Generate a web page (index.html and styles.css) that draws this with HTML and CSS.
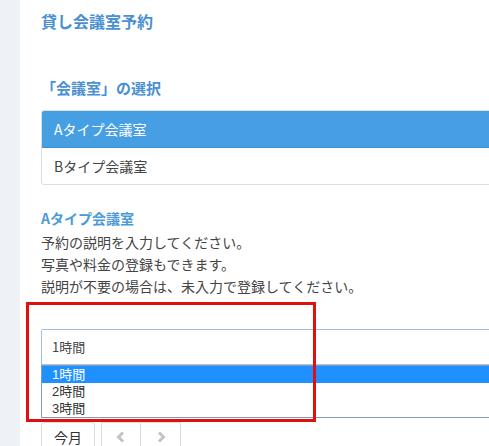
FILE: index.html
```html
<!DOCTYPE html>
<html lang="ja">
<head>
<meta charset="utf-8">
<link rel="stylesheet" href="styles.css">
</head>
<body>
<div class="page">
  <aside class="side"></aside>
  <main class="main">
    <h1 class="title">貸し会議室予約</h1>
    <h2 class="heading">「会議室」の選択</h2>
    <div class="list">
      <div class="item active">Aタイプ会議室</div>
      <div class="item">Bタイプ会議室</div>
    </div>
    <h3 class="sub">Aタイプ会議室</h3>
    <p class="desc">予約の説明を入力してください。<br>写真や料金の登録もできます。<br>説明が不要の場合は、未入力で登録してください。</p>
    <div class="select-wrap">
      <div class="select">1時間</div>
      <ul class="options">
        <li class="opt sel">1時間</li>
        <li class="opt">2時間</li>
        <li class="opt">3時間</li>
      </ul>
      <div class="mark"></div>
    </div>
    <div class="btns">
      <button class="btn today">今月</button>
      <div class="group">
        <button class="btn nav"><svg width="10" height="12" viewBox="0 0 10 12"><path d="M7 1.5 L2.5 6 L7 10.5" fill="none" stroke="#c4c4c4" stroke-width="3"/></svg></button>
        <button class="btn nav"><svg width="10" height="12" viewBox="0 0 10 12"><path d="M3 1.5 L7.5 6 L3 10.5" fill="none" stroke="#c4c4c4" stroke-width="3"/></svg></button>
      </div>
    </div>
  </main>
</div>
</body>
</html>
```
FILE: styles.css
```css
html, body {
  margin: 0;
  padding: 0;
  background: #fff;
  overflow: hidden;
}
body {
  font-family: "Noto Sans CJK JP", "Noto Sans", sans-serif;
  color: #333;
  width: 489px;
  height: 446px;
}
.page {
  display: flex;
  height: 446px;
}
.side {
  width: 20px;
  flex: none;
  background: #eef2f7;
}
.main {
  flex: none;
  width: 520px;
  padding-left: 21px;
  position: relative;
}
.title {
  margin: 10px 0 0;
  font-size: 16px;
  line-height: 22px;
  font-weight: bold;
  color: #4a90d2;
}
.heading {
  margin: 45px 0 0;
  font-size: 15px;
  line-height: 22px;
  font-weight: bold;
  color: #4a90d2;
}
.list {
  margin-top: 11px;
  border: 1px solid #ddd;
  border-radius: 3px;
  overflow: hidden;
}
.item {
  height: 36px;
  line-height: 36px;
  padding-left: 12px;
  font-size: 14px;
  color: #444;
}
.item.active {
  background: #479fe3;
  color: #fff;
  border-bottom: 1px solid #3f90d0;
}
.sub {
  margin: 22px 0 0;
  font-size: 14px;
  line-height: 22px;
  font-weight: bold;
  color: #4a9ad8;
}
.desc {
  margin: 2px 0 0;
  font-size: 14px;
  line-height: 22px;
  color: #444;
}
.select-wrap {
  margin-top: 32px;
  position: relative;
}
.select {
  height: 34px;
  line-height: 34px;
  border: 1px solid #9cc0ec;
  border-bottom-color: #a8c4e4;
  padding-left: 10px;
  font-size: 13px;
  color: #444;
  border-radius: 2px 2px 0 0;
}
.options {
  position: absolute;
  left: 0;
  right: 0;
  top: 36px;
  margin: 0;
  padding: 0;
  list-style: none;
  border: 1px solid #7f9db9;
  background: #fff;
  z-index: 2;
}
.opt {
  height: 17px;
  line-height: 17px;
  font-family: "Liberation Sans", "Noto Sans CJK JP", sans-serif;
  font-size: 13px;
  padding-left: 10px;
  color: #333;
  overflow: hidden;
}
.opt.sel {
  background: #1e90ff;
  color: #fff;
}
.mark {
  position: absolute;
  left: -15px;
  top: -27px;
  width: 284px;
  height: 114px;
  border: 3px solid #e01010;
  z-index: 3;
  pointer-events: none;
}
.btns {
  margin-top: 57px;
  display: flex;
  gap: 6px;
}
.btn {
  font-family: inherit;
  background: #fff;
  border: 1px solid #ddd;
  border-radius: 3px 3px 0 0;
  height: 30px;
  padding: 0;
  font-size: 14px;
  color: #333;
}
.today {
  width: 54px;
}
.group {
  display: flex;
}
.nav {
  width: 40px;
  display: flex;
  align-items: center;
  justify-content: center;
  border-radius: 0;
}
.nav + .nav {
  border-left: none;
}
```
